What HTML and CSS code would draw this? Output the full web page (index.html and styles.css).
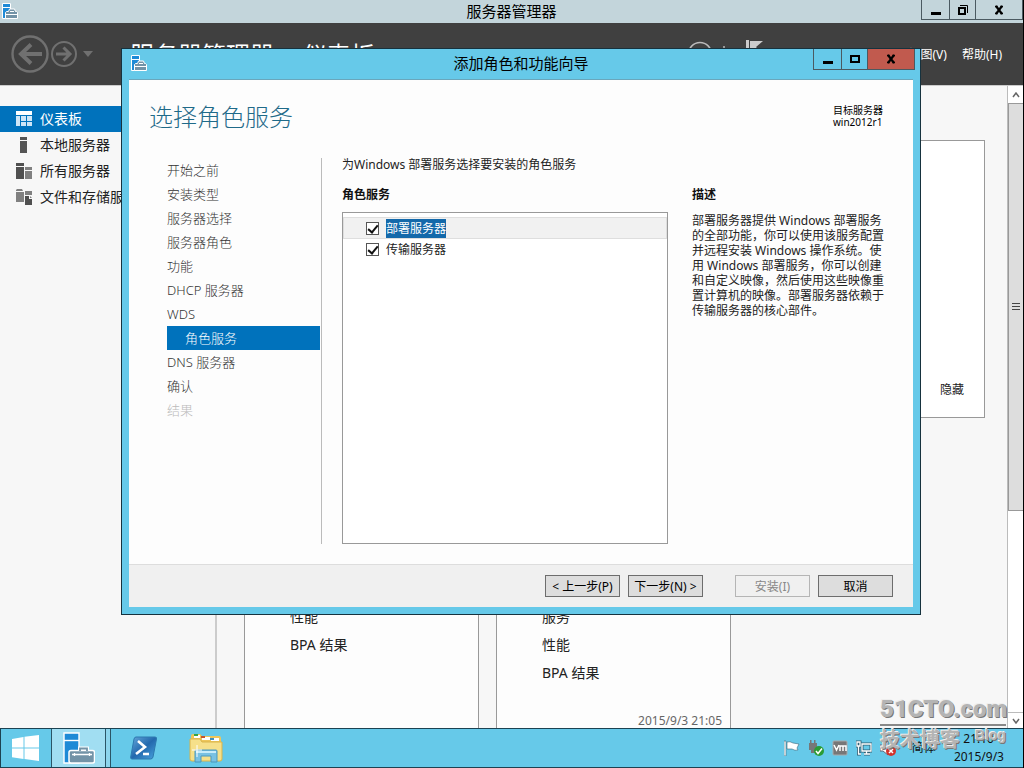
FILE: index.html
```html
<!DOCTYPE html>
<html lang="zh-CN">
<head>
<meta charset="utf-8">
<title>服务器管理器</title>
<link rel="stylesheet" href="styles.css">
</head>
<body>
<svg class="defs" aria-hidden="true">
  <symbol id="server-manager" viewBox="0 0 32 32">
    <path fill="#1e8ad6" stroke="#fff" stroke-width="1.4" d="M1 1h15v30H1z"/>
    <path stroke="#fff" stroke-width="1.4" d="M1 8.500h15"/>
    <path fill="none" stroke="#fff" stroke-width="4" d="M17 20v-3.500h7V20"/>
    <rect x="6" y="18.500" width="25.500" height="12.500" rx="2" fill="#7393a7" stroke="#fff" stroke-width="1.500"/>
    <path fill="none" stroke="#7393a7" stroke-width="1.800" d="M17 19v-2.500h7V19"/>
    <path stroke="#fff" stroke-width="1.300" d="M9 22.500h20M11.500 21v3M26.500 21v3"/>
  </symbol>
  <symbol id="server-manager-small" viewBox="0 0 16 16">
    <path fill="#1e8ad6" stroke="#fff" d="M.5 .5h8v15h-8z"/>
    <path stroke="#fff" d="M1 4.500h7"/>
    <path fill="#7393a7" stroke="#fff" d="M3.500 9.500l1-1h2l1-2.500h5l1 2.500h1l1 1v6h-12z"/>
    <path fill="none" stroke="#fff" d="M4 11.500h11M8 8.500h4"/>
  </symbol>
</svg>
<div class="desktop">
  <div class="main-window">
    <header class="titlebar">
      <svg class="title-icon"><use href="#server-manager-small"/></svg>
      <h1 class="window-title">服务器管理器</h1>
      <div class="controls">
        <button class="ctl ctl-min" aria-label="最小化"><svg width="10" height="12"><path d="M0 8h10v3H0z"/></svg></button>
        <button class="ctl ctl-max" aria-label="还原"><svg width="12" height="12"><path fill="none" stroke="#000" stroke-width="2" d="M2 4h6v6H2z"/><path fill="none" stroke="#000" d="M3 1.500h7.500V9"/></svg></button>
        <button class="ctl ctl-close" aria-label="关闭"><svg width="10" height="10"><path fill="none" stroke="#000" stroke-width="2.200" d="M2 1l6 8M8 1L2 9"/><path stroke="#000" stroke-width="1.500" d="M1 1.500h2.500M6.500 1.500H9M1 8.500h2.500M6.500 8.500H9"/></svg></button>
      </div>
    </header>
    <div class="toolbar">
      <button class="nav-btn" aria-label="后退"><svg width="38" height="38"><circle cx="19" cy="19" r="17.500" fill="none" stroke="#707070" stroke-width="2.400"/><path fill="none" stroke="#707070" stroke-width="4" d="M31 19H10M20 9.500L10 19l10 9.500"/></svg></button>
      <button class="nav-btn" aria-label="前进"><svg width="26" height="26"><circle cx="13" cy="13" r="12" fill="none" stroke="#707070" stroke-width="2"/><path fill="none" stroke="#707070" stroke-width="3" d="M5 13h14M12.500 6.500L19 13l-6.500 6.500"/></svg></button>
      <button class="nav-btn nav-more" aria-label="历史记录"><svg width="10" height="6"><path fill="#707070" d="M0 0h10L5 6z"/></svg></button>
      <div class="crumb"><span>服务器管理器</span><span>·</span><span>仪表板</span></div>
      <div class="tools">
        <svg width="26" height="26"><circle cx="13" cy="13" r="11.500" fill="none" stroke="#bbb" stroke-width="1.500"/><path fill="none" stroke="#bbb" stroke-width="2" d="M8 14a6 6 0 0 1 10-3V7"/></svg>
        <span class="tool-sep"></span>
        <svg width="18" height="28"><path fill="#ccc" d="M1 0h3v28H1zM5 1h13l-7 6 5 6H5z"/></svg>
      </div>
      <nav class="menu"><a href="#view">视图(V)</a><a href="#help">帮助(H)</a></nav>
    </div>
    <div class="body">
      <nav class="sidebar">
        <a class="side-item side-active" href="#dash"><svg width="16" height="16"><path fill="#fff" d="M0 0h16v4H0z"/><path fill="#cfe6f7" d="M0 5h4v10H0zM5 5h5v5H5zM11 5h5v5h-5zM5 11h5v4H5zM11 11h5v4h-5z"/></svg>仪表板</a>
        <a class="side-item" href="#local"><svg width="16" height="16"><path fill="#555" d="M4 0h7v3H4zM4 4h7v12H4z"/></svg>本地服务器</a>
        <a class="side-item" href="#all"><svg width="16" height="16"><path fill="#505050" d="M0 0h8v3H0zM0 4h8v12H0z"/><path fill="#808080" d="M9 4h7v3H9zM9 8h7v8H9z"/></svg>所有服务器</a>
        <a class="side-item" href="#files"><svg width="16" height="16"><path fill="#808080" d="M0 1l1-1h5l1 2H0zM0 3h8v10H0zM9 2h7v4H9z"/><path fill="#505050" d="M9 7h4v3h3v6H9z"/><path fill="#808080" d="M14 7l2 2h-2z"/></svg>文件和存储服务</a>
      </nav>
      <main class="dashboard">
        <section class="welcome"><button class="hide-btn">隐藏</button></section>
        <div class="tiles">
          <section class="tile"><ul><li>性能</li><li>BPA 结果</li></ul></section>
          <section class="tile"><ul><li>服务</li><li>性能</li><li>BPA 结果</li></ul><time>2015/9/3 21:05</time></section>
        </div>
      </main>
      <div class="scrollbar">
        <button class="sb-btn" aria-label="向上滚动"><svg width="8" height="6"><path fill="none" stroke="#666" stroke-width="1.500" d="M1 5l3-4 3 4"/></svg></button>
        <div class="sb-track"><div class="sb-thumb"><svg width="8" height="8"><path stroke="#444" d="M0 .5h8M0 3.500h8M0 6.500h8"/></svg></div></div>
        <button class="sb-btn sb-down" aria-label="向下滚动"><svg width="8" height="6"><path fill="none" stroke="#666" stroke-width="1.500" d="M1 1l3 4 3-4"/></svg></button>
      </div>
    </div>
  </div>

  <footer class="taskbar">
    <button class="task start" aria-label="开始"><svg width="28" height="26"><path fill="#fff" d="M0 4l11.500-2v10.500H0zM12.500 1.800L27 0v12.500H12.500zM0 13.500h11.500V24L0 22.200zM12.500 13.500H27V26l-14.500-2z"/></svg></button>
    <button class="task running" aria-label="服务器管理器"><svg width="32" height="32"><use href="#server-manager"/></svg></button>
    <span class="stack"></span>
    <button class="task shell" aria-label="PowerShell"><svg width="28" height="24"><defs><linearGradient id="ps" x2="1" y2="1"><stop stop-color="#68a9dc"/><stop offset=".5" stop-color="#2369ae"/><stop offset="1" stop-color="#4aa4de"/></linearGradient></defs><path fill="url(#ps)" stroke="#2c79b0" d="M6 1h19q2 0 1.500 2L23 21q-.5 2-2.500 2H2Q.3 23 .7 21L4 3q.5-2 2-2z"/><path fill="none" stroke="#fff" stroke-width="2.600" d="M8 5l7 6-9 7M13 18h6"/></svg></button>
    <button class="task" aria-label="文件资源管理器"><svg width="34" height="30"><path fill="#eec65a" d="M2 3q0-2 2-2h7l2 2h17q2 0 2 2v20H2z"/><path fill="#fff" d="M5 2h6v3H5zM13 4h8v3h-8zM22 5h8v3h-8z"/><path fill="#35a343" d="M5 1h4v2H5z"/><path fill="#c5552d" d="M12 3h4v2h-4z"/><path fill="#3f8fc0" d="M21 5h4v2h-4z"/><path fill="#f6e08a" stroke="#d9b44a" d="M1 6h10l2 3h20v17q0 2-2 2H3q-2 0-2-2z"/><path fill="#79c1e3" stroke="#4b98bd" d="M6 18q0-1 1-1h20q1 0 1 1v11h-6v-6H12v6H6z"/><path fill="#c8ecfa" d="M7 18h20v2H7z"/><path stroke="#fff" d="M8 12v12M3 17h10"/></svg></button>
    <div class="tray">
      <svg width="16" height="16"><path fill="#fff" stroke="#37657a" stroke-width=".6" d="M0 1h2v15H0zM3 2q3-1 6 1l6 1-2 4 1 2q-3 1-6-1H3z"/></svg>
      <svg width="16" height="16"><path fill="#777" d="M2 0h1.500v4H2zM6 0h1.500v4H6zM1 3h8v7H7v3H3v-3H1z"/><circle cx="11" cy="11" r="5" fill="#2a9c36"/><path fill="none" stroke="#fff" stroke-width="1.500" d="M8 11l2 2.500L14 8.500"/></svg>
      <svg width="16" height="16"><rect x="1" y="1" width="14" height="14" rx="1" fill="#777" stroke="#aaa"/><path fill="none" stroke="#fff" stroke-width="1.500" d="M2 5l2.500 5L7 5M8 11V6h3v5M11 6h3v5"/></svg>
      <svg width="16" height="16"><g fill="none" stroke="#2f6075" stroke-width="3"><path d="M6 4h9v7H6zM8 14h6M1 2h3v4H1zM2.500 6v8H5"/></g><g fill="none" stroke="#fff" stroke-width="1.300"><path d="M6 4h9v7H6zM8 14h6M10.500 11v3M1 2h3v4H1zM2.500 6v8H5"/></g></svg>
      <svg width="16" height="16"><path fill="#fff" stroke="#667" d="M0 5h3l5-4v14l-5-4H0z"/><circle cx="11" cy="11" r="5" fill="#d2332b"/><path stroke="#fff" stroke-width="1.500" d="M9 9l4 4M13 9l-4 4"/></svg>
      <span class="ime">简体</span>
      <div class="clock"><span>21:10</span><span>2015/9/3</span></div>
    </div>
  </footer>

  <section class="dialog" role="dialog" aria-labelledby="dlg-title">
    <header class="dialog-bar">
      <svg class="title-icon"><use href="#server-manager-small"/></svg>
      <h2 class="window-title" id="dlg-title">添加角色和功能向导</h2>
      <div class="controls">
        <button class="ctl ctl-min" aria-label="最小化"><svg width="10" height="12"><path d="M0 8h10v3H0z"/></svg></button>
        <button class="ctl ctl-max" aria-label="最大化"><svg width="10" height="8"><path fill="none" stroke="#000" stroke-width="2" d="M1 1h8v6H1z"/></svg></button>
        <button class="ctl ctl-close red" aria-label="关闭"><svg width="10" height="10"><path fill="none" stroke="#000" stroke-width="2.200" d="M2 1l6 8M8 1L2 9"/><path stroke="#000" stroke-width="1.500" d="M1 1.500h2.500M6.500 1.500H9M1 8.500h2.500M6.500 8.500H9"/></svg></button>
      </div>
    </header>
    <div class="wizard">
      <div class="wizard-head">
        <h3>选择角色服务</h3>
        <p class="target">目标服务器<br>win2012r1</p>
      </div>
      <div class="wizard-body">
        <nav class="steps">
          <a href="#s1">开始之前</a><a href="#s2">安装类型</a><a href="#s3">服务器选择</a><a href="#s4">服务器角色</a><a href="#s5">功能</a><a href="#s6">DHCP 服务器</a><a href="#s7">WDS</a><a class="current" href="#s8">角色服务</a><a href="#s9">DNS 服务器</a><a href="#s10">确认</a><a class="off" href="#s11">结果</a>
        </nav>
        <div class="roles">
          <p class="intro">为Windows 部署服务选择要安装的角色服务</p>
          <h4>角色服务</h4>
          <div class="role-list">
            <label class="role selected"><input type="checkbox" checked><span>部署服务器</span></label>
            <label class="role"><input type="checkbox" checked><span>传输服务器</span></label>
          </div>
        </div>
        <aside class="desc">
          <h4>描述</h4>
          <p>部署服务器提供 Windows 部署服务<br>的全部功能，你可以使用该服务配置<br>并远程安装 Windows 操作系统。使<br>用 Windows 部署服务，你可以创建<br>和自定义映像，然后使用这些映像重<br>置计算机的映像。部署服务器依赖于<br>传输服务器的核心部件。</p>
        </aside>
      </div>
      <div class="wizard-foot">
        <button class="btn">&lt; 上一步(P)</button>
        <button class="btn">下一步(N) &gt;</button>
        <button class="btn group" disabled>安装(I)</button>
        <button class="btn">取消</button>
      </div>
    </div>
  </section>

  <div class="watermark">
    <div class="wm-top">51CTO.com</div>
    <div class="wm-bottom"><span>技术博客</span><small>Blog</small></div>
  </div>
</div>
</body>
</html>
```
FILE: styles.css
```css
* { box-sizing: border-box; }
body, h1, h2, h3, h4, p, ul { margin: 0; padding: 0; }
ul { list-style: none; }
body { font: 12px/16px "Noto Sans", "Noto Sans CJK SC", sans-serif; color: #222; }
a { color: inherit; text-decoration: none; }
button { font: inherit; color: inherit; padding: 0; border: 0; background: none; }
svg { display: block; flex: none; }
.defs { position: absolute; width: 0; height: 0; }

.desktop { position: relative; height: 100vh; display: flex; flex-direction: column; overflow: hidden; border-right: 1px solid #000; background: #f7f7f7; }
.main-window { flex: 1; min-height: 0; display: flex; flex-direction: column; }

.titlebar, .dialog-bar { display: grid; grid-template-columns: 1fr auto 1fr; }
.titlebar { height: 23px; background: #c3d5db; }
.title-icon { width: 16px; height: 16px; margin: 3px 0 0 2px; }
.window-title { font-size: 15px; line-height: 22px; font-weight: 400; color: #000; }
.controls { display: flex; justify-self: end; align-self: start; height: 21px; border: 1px solid #4b5a61; border-top: 0; }
.titlebar .controls { height: 20px; }
.ctl { display: flex; align-items: center; justify-content: center; width: 27px; }
.ctl + .ctl { border-left: 1px solid #4b5a61; }
.ctl-max { width: 26px; }
.ctl-close { width: 47px; }
.red { background: #c15a4e; }

.toolbar { height: 62px; display: flex; align-items: center; padding-left: 11px; background: #404040; color: #fff; }
.nav-btn + .nav-btn { margin-left: 2px; }
.toolbar .nav-more { margin-left: 6px; }
.crumb { margin-left: 37px; flex: 1; display: flex; gap: 11px; padding-top: 2px; font-size: 24px; line-height: 32px; white-space: nowrap; }
.tools { display: flex; align-items: center; gap: 10px; margin-right: 146px; }
.tool-sep { width: 2px; height: 16px; margin-right: 10px; background: #999; }
.menu { display: flex; gap: 15px; padding-top: 2px; padding-right: 21px; font-size: 12px; }

.body { flex: 1; min-height: 0; display: flex; border-top: 1px solid #ccc; }
.sidebar { width: 217px; padding-top: 20px; border-right: 2px solid #ccc; }
.side-item { display: flex; align-items: center; gap: 8px; height: 26px; padding-left: 16px; font-size: 14px; }
.side-active { background: #0072bc; color: #fff; }
.dashboard { flex: 1; min-width: 0; padding: 54px 22px 0 27px; overflow: hidden; }
.welcome { display: flex; justify-content: flex-end; align-items: flex-end; height: 278px; padding: 19px 20px; border: 1px solid #999; background: #fff; }
.tiles { display: flex; gap: 17px; margin-top: 32px; }
.tile { width: 235px; height: 300px; padding: 152px 8px 0 45px; border: 1px solid #999; background: #fdfdfd; font-size: 14px; line-height: 28px; display: flex; flex-direction: column; }
.tile time { align-self: flex-end; margin-top: 26px; font-size: 12px; line-height: 16px; color: #666; }

.scrollbar { width: 16px; display: flex; flex-direction: column; border-left: 1px solid #bbb; background: #fff; }
.sb-btn { display: flex; align-items: center; justify-content: center; height: 17px; }
.sb-down { height: 16px; border-top: 1px solid #bbb; }
.sb-track { flex: 1; }
.sb-thumb { display: flex; align-items: center; justify-content: center; height: 67%; border: 1px solid #999; border-right: 0; background: #ddd; }

.taskbar { height: 40px; display: flex; background: #66c9e9; border: solid #1c4252; border-width: 1px 0 1px 1px; }
.task { display: flex; align-items: center; justify-content: center; width: 62px; }
.start { width: 50px; }
.running { width: 55px; border: 1px solid #2a5567; border-width: 0 1px; background: #a1def2; }
.stack { width: 5px; border-right: 1px solid #2a5567; background: #8cd5ed; }
.shell { width: 64px; padding-left: 2px; }
.tray { margin-left: auto; display: flex; align-items: center; gap: 8px; padding-right: 19px; color: #111; }
.ime { margin-left: 8px; }
.clock { display: flex; flex-direction: column; align-items: flex-end; margin-left: 10px; line-height: 18px; }
.clock span:first-child { padding-right: 10px; }

.dialog { position: absolute; inset: 48px 102px 153px 121px; display: flex; flex-direction: column; padding: 0 7px 7px; border: 1px solid #16323e; background: #66c9e9; }
.dialog-bar { height: 30px; }
.dialog-bar .title-icon { margin-top: 6px; }
.dialog-bar .window-title { line-height: 28px; }
.dialog-bar .controls { margin-right: -2px; }
.wizard { flex: 1; min-height: 0; display: flex; flex-direction: column; background: #fdfdfd; border-top: 1px solid #6aa6bb; }
.wizard-head { display: flex; justify-content: space-between; padding: 21px 30px 0 20px; height: 78px; }
.wizard-head h3 { font-size: 24px; line-height: 32px; font-weight: 300; color: #1f6a89; }
.target { font-size: 10px; line-height: 12px; color: #000; padding-top: 3px; }
.wizard-body { flex: 1; min-height: 0; display: flex; padding-bottom: 20px; }
.steps { width: 193px; padding-left: 38px; padding-right: 1px; border-right: 1px solid #bbb; }
.steps a { display: block; font-size: 13px; line-height: 24px; font-weight: 300; color: #333; }
.steps .current { padding-left: 18px; background: #0072bc; color: #fff; }
.steps .off { color: #bbb; }
.roles { flex: 1; display: flex; flex-direction: column; margin-left: 20px; }
.roles .intro { line-height: 14px; margin-bottom: 15px; }
h4 { font-size: 12px; line-height: 16px; color: #111; }
.role-list { flex: 1; margin-top: 9px; padding-top: 4px; border: 1px solid #999; background: #fff; }
.role { display: flex; align-items: center; gap: 7px; height: 20px; padding-left: 23px; }
.role span { line-height: 18px; padding-top: 1px; }
.selected { height: 22px; padding-left: 22px; border: 1px solid #dedede; background: #f1f1f1; }
.selected span { background: #1469aa; color: #fff; }
.role input { appearance: none; display: grid; place-items: center; width: 13px; height: 13px; margin: 0; border: 1px solid #555; background: #fff; }
.role input::after { content: ""; width: 4px; height: 8px; margin-bottom: 2px; border: solid #111; border-width: 0 2px 2px 0; transform: rotate(40deg); }
.desc { width: 221px; margin-left: 24px; padding-top: 29px; white-space: nowrap; }
.desc p { margin-top: 10px; line-height: 15px; }
.wizard-foot { display: flex; justify-content: flex-end; gap: 8px; padding: 10px 20px; border-top: 1px solid #ddd; background: #f0f0f0; }
.btn { width: 75px; height: 22px; padding-top: 1px; border: 1px solid #6d6d6d; background: #ddd; color: #000; white-space: nowrap; }
.btn:disabled { border-color: #b5b5b5; background: #f0f0f0; color: #888; }
.group { margin-left: 24px; }

.watermark { position: absolute; right: 17px; bottom: 14px; width: 126px; color: #b4b4b4; font-weight: 700; text-shadow: -1px -1px 0 #eee, 1px 1px 0 #777; }
.wm-top { font: 900 24px/30px Roboto, "Liberation Sans", sans-serif; border-bottom: 2px solid #888; white-space: nowrap; }
.wm-bottom { display: flex; justify-content: space-between; font-size: 20px; line-height: 28px; white-space: nowrap; }
.wm-bottom small { font: 700 14px/18px "Liberation Sans", sans-serif; }
```
